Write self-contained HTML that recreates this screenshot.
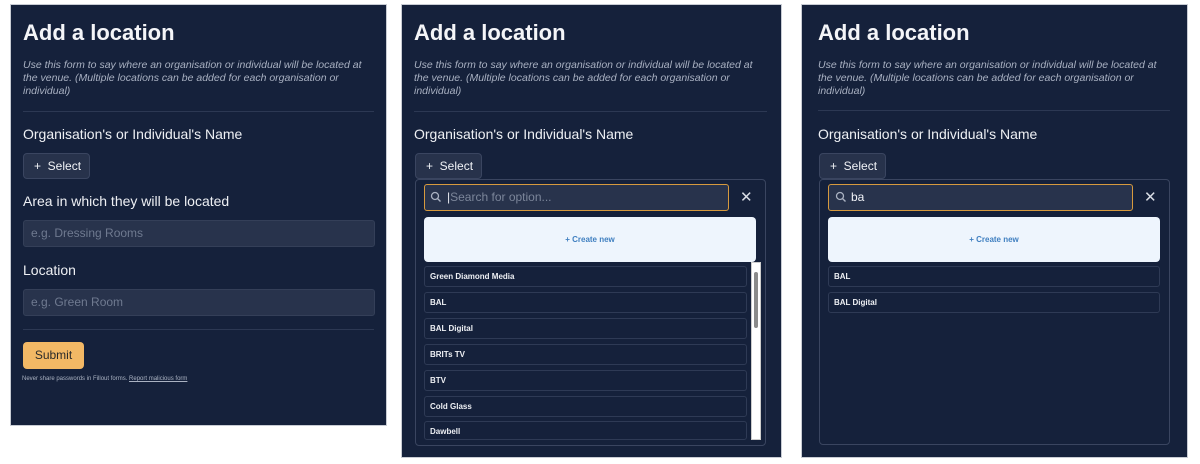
<!DOCTYPE html>
<html><head><style>
*{margin:0;padding:0;box-sizing:border-box}
body{width:1200px;height:464px;background:#fff;position:relative;overflow:hidden;font-family:"Liberation Sans","DejaVu Sans",sans-serif;color:#f1f3f7}
.p{position:absolute;background:#15213b;border:1px solid #c8ccd4}
.a{position:absolute;white-space:nowrap}
h1{position:absolute;font-size:22px;font-weight:bold;color:#f4f5f8}
.d{position:absolute;font-size:10.5px;font-style:italic;color:#a9b1c2;line-height:13px;width:355px}
.hr{position:absolute;height:1px;background:#2c3853}
.l{position:absolute;font-size:14px;color:#eef0f4}
.btn{position:absolute;height:26px;width:67px;background:#27324b;border:1px solid #3a4560;border-radius:4px;font-size:12px;line-height:24px;padding-left:10px}
.in{position:absolute;height:27px;background:#28334c;border:1px solid #343f58;border-radius:3px;font-size:12px;color:#6f7a90;line-height:25px;padding-left:7px}
.dd{position:absolute;border:1px solid #3a4560;border-radius:4px;background:#15213b}
.s{position:absolute;height:27px;background:#28334c;border:1.5px solid #d79a3e;border-radius:3px;font-size:12px;line-height:24px;padding-left:22px;color:#7c869a}
.cn{position:absolute;height:45px;background:#eef5fd;border-radius:4px;font-size:8px;font-weight:bold;color:#3f7fc0;text-align:center;line-height:45px}
.it{position:absolute;height:21px;border:1px solid #2e3a55;border-radius:3px;font-size:8px;font-weight:bold;line-height:19px;padding-left:5px;color:#eef0f4}
.x{position:absolute;font-size:15px;color:#d9dde5}
</style></head><body>

<div class="p" style="left:10px;top:4px;width:377px;height:422px"></div>
<h1 style="left:23px;top:20px">Add a location</h1>
<div class="d" style="left:23px;top:59px">Use this form to say where an organisation or individual will be located at the venue. (Multiple locations can be added for each organisation or individual)</div>
<div class="hr" style="left:23px;top:111px;width:351px"></div>
<div class="l" style="left:23px;top:126px">Organisation's or Individual's Name</div>
<div class="btn" style="left:23px;top:153px">+&nbsp; Select</div>
<div class="l" style="left:23px;top:193px">Area in which they will be located</div>
<div class="in" style="left:23px;top:220px;width:352px">e.g. Dressing Rooms</div>
<div class="l" style="left:23px;top:262px">Location</div>
<div class="in" style="left:23px;top:289px;width:352px">e.g. Green Room</div>
<div class="hr" style="left:23px;top:329px;width:351px"></div>
<div class="a" style="left:23px;top:342px;width:61px;height:27px;background:#f2b865;border-radius:4px;color:#2a2a2a;font-size:12px;line-height:27px;text-align:center">Submit</div>
<div class="a" style="left:22px;top:376px;font-size:6px;color:#aab2c2">Never share passwords in Fillout forms. <u>Report malicious form</u></div>

<div class="p" style="left:401px;top:4px;width:381px;height:454px"></div>
<h1 style="left:414px;top:20px">Add a location</h1>
<div class="d" style="left:414px;top:59px">Use this form to say where an organisation or individual will be located at the venue. (Multiple locations can be added for each organisation or individual)</div>
<div class="hr" style="left:414px;top:111px;width:353px"></div>
<div class="l" style="left:414px;top:126px">Organisation's or Individual's Name</div>
<div class="btn" style="left:415px;top:153px">+&nbsp; Select</div>
<div class="dd" style="left:415px;top:179px;width:351px;height:267px"></div>
<div class="s" style="left:424px;top:184px;width:305px"><span style="color:#e5e8ee">|</span>Search for option...</div>
<svg class="a" style="left:430px;top:191px" width="12" height="12" viewBox="0 0 12 12"><circle cx="5" cy="5" r="3.5" fill="none" stroke="#aab2c2" stroke-width="1.3"/><path d="M7.6 7.6L10.5 10.5" stroke="#aab2c2" stroke-width="1.4"/></svg>
<div class="x" style="left:740px;top:188px">✕</div>
<div class="cn" style="left:424px;top:217px;width:332px">+ Create new</div>
<div class="it" style="left:424px;top:266px;width:323px">Green Diamond Media</div>
<div class="it" style="left:424px;top:292px;width:323px">BAL</div>
<div class="it" style="left:424px;top:318px;width:323px">BAL Digital</div>
<div class="it" style="left:424px;top:344px;width:323px">BRITs TV</div>
<div class="it" style="left:424px;top:370px;width:323px">BTV</div>
<div class="it" style="left:424px;top:396px;width:323px">Cold Glass</div>
<div class="it" style="left:424px;top:421px;width:323px;height:19px">Dawbell</div>
<div class="a" style="left:751px;top:262px;width:10px;height:178px;background:#fff;border:1px solid #ccc"></div>
<div class="a" style="left:754px;top:272px;width:4px;height:56px;background:#8a8a8a;border-radius:2px"></div>

<div class="p" style="left:801px;top:4px;width:387px;height:454px"></div>
<h1 style="left:818px;top:20px">Add a location</h1>
<div class="d" style="left:818px;top:59px">Use this form to say where an organisation or individual will be located at the venue. (Multiple locations can be added for each organisation or individual)</div>
<div class="hr" style="left:818px;top:110px;width:352px"></div>
<div class="l" style="left:818px;top:126px">Organisation's or Individual's Name</div>
<div class="btn" style="left:819px;top:153px">+&nbsp; Select</div>
<div class="dd" style="left:819px;top:179px;width:351px;height:266px"></div>
<div class="s" style="left:828px;top:184px;width:305px;color:#f1f3f7">ba</div>
<svg class="a" style="left:835px;top:191px" width="12" height="12" viewBox="0 0 12 12"><circle cx="5" cy="5" r="3.5" fill="none" stroke="#aab2c2" stroke-width="1.3"/><path d="M7.6 7.6L10.5 10.5" stroke="#aab2c2" stroke-width="1.4"/></svg>
<div class="x" style="left:1144px;top:188px">✕</div>
<div class="cn" style="left:828px;top:217px;width:332px">+ Create new</div>
<div class="it" style="left:828px;top:266px;width:332px">BAL</div>
<div class="it" style="left:828px;top:292px;width:332px">BAL Digital</div>
</body></html>
